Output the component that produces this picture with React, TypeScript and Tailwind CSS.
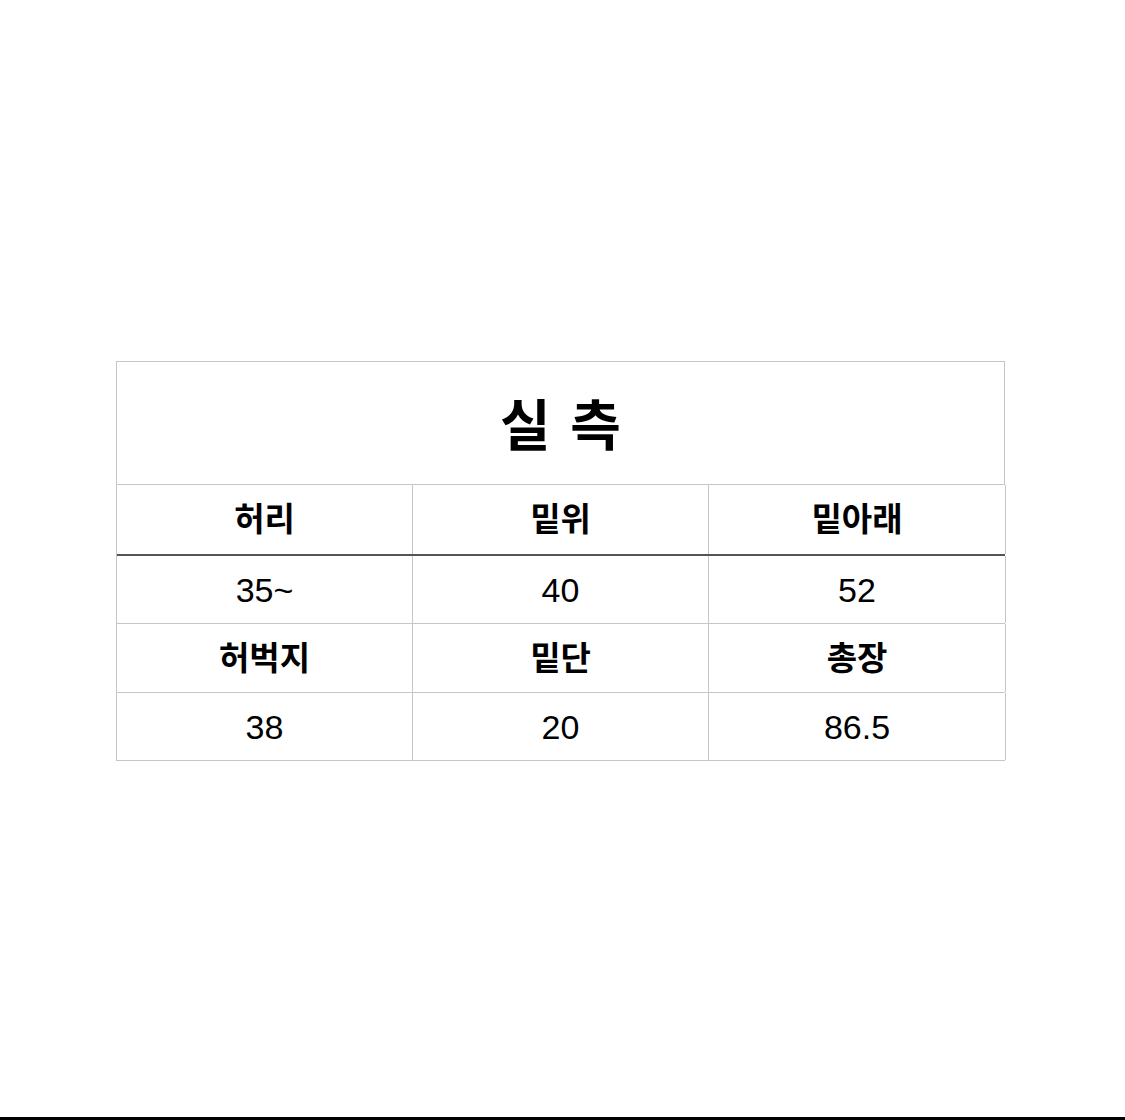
const ROWS: { cells: string[]; head: boolean; h: string; thick?: boolean }[] = [
  { cells: ["허리", "밑위", "밑아래"], head: true, h: "h-[71px]", thick: true },
  { cells: ["35~", "40", "52"], head: false, h: "h-[68px]" },
  { cells: ["허벅지", "밑단", "총장"], head: true, h: "h-[69px]" },
  { cells: ["38", "20", "86.5"], head: false, h: "h-[68px]" },
];

export default function App() {
  return (
    <div
      className="w-full h-[1120px] bg-white flex flex-col text-black"
      style={{ fontFamily: '"Liberation Sans", "Noto Sans CJK KR", sans-serif' }}
    >
      <div className="pt-[361px] pl-[116px]">
        <div className="w-[889px] border-l border-t border-[#c6c6c6]">
          {/* title */}
          <div className="h-[123px] border-r border-b border-[#c6c6c6] flex items-center justify-center pt-[6px]">
            <span className="text-[55px] font-bold leading-none tracking-[0.04em] pl-[2px]">실 측</span>
          </div>

          {ROWS.map((row, i) => (
            <div
              key={i}
              className={
                "grid grid-cols-[296px_296px_297px] " +
                row.h +
                (row.thick ? " border-b-2 border-[#555555]" : " border-b border-[#c6c6c6]")
              }
            >
              {row.cells.map((c, j) => (
                <div
                  key={j}
                  className="border-r border-[#c6c6c6] flex items-center justify-center"
                >
                  <span
                    className={
                      row.head
                        ? "text-[33px] font-bold leading-none"
                        : "text-[34px] leading-none"
                    }
                  >
                    {c}
                  </span>
                </div>
              ))}
            </div>
          ))}
        </div>
      </div>
      <div className="flex-1" />
      <div className="h-[3px] bg-black" />
    </div>
  );
}
